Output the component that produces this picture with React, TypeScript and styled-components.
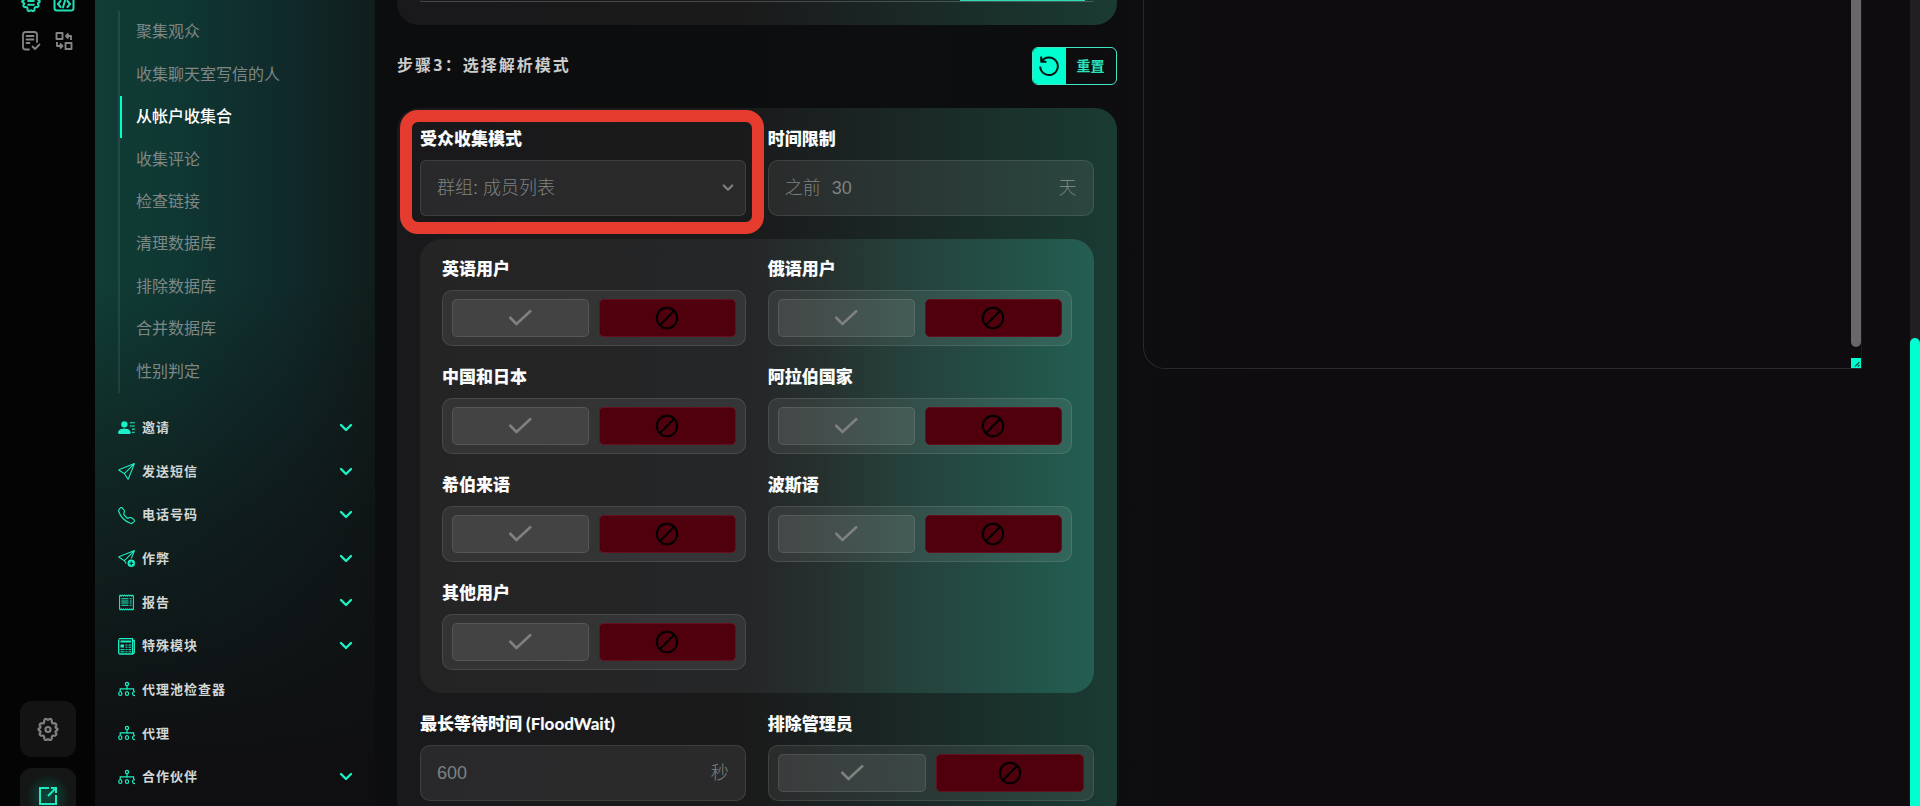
import React from 'react';
import styled, { createGlobalStyle, css } from 'styled-components';
import {
  BsPersonLinesFill,
  BsSend,
  BsTelephone,
  BsSendPlus,
  BsReceipt,
} from 'react-icons/bs';

const accent = '#00ffd0';
const cjk = "'Noto Sans CJK SC'";

const GlobalStyle = createGlobalStyle`
  *, *::before, *::after { box-sizing: border-box; }
  body {
    margin: 0;
    background: #0f0d10;
    color: #fff;
    font-family: 'Liberation Sans', ${cjk}, sans-serif;
  }
  button, input, select, textarea { font: inherit; color: inherit; }
`;

const Shell = styled.div`
  display: flex;
  height: 100vh;
  overflow: hidden;
  background: linear-gradient(90deg, #0b0d0e 375px, #0c0e0f 900px, #0f0c10 1300px);
`;

const Rail = styled.aside`
  flex: none;
  width: 95px;
  padding: 0 20px;
  display: flex;
  flex-direction: column;
  justify-content: space-between;
  background: #040405;
`;

const RailTools = styled.div`
  display: grid;
  grid-template-columns: 22px 22px;
  justify-content: center;
  gap: 18px 11px;
  flex: none;
  margin-top: -10px;
`;

const IconButton = styled.button<{ $on?: boolean }>`
  padding: 0;
  border: 0;
  background: none;
  display: grid;
  place-items: center;
  height: 22px;
  color: ${(p) => (p.$on ? '#1fe0b8' : '#858585')};
`;

const RailBottom = styled.div`
  display: flex;
  flex-direction: column;
  gap: 11px;
  margin-bottom: -18px;
`;

const TileButton = styled.button<{ $glow?: boolean }>`
  width: 56px;
  height: 56px;
  border: 0;
  border-radius: 12px;
  display: grid;
  place-items: center;
  padding: 0;
  background: ${(p) => (p.$glow ? 'radial-gradient(circle, #0c4a3c, #141716 55%)' : '#131314')};
  color: ${(p) => (p.$glow ? '#1fe8bd' : '#808080')};
`;

const Sidebar = styled.nav`
  flex: none;
  width: 280px;
  padding: 11px 22px 0 23px;
  overflow: hidden;
  background:
    linear-gradient(180deg, rgba(15, 15, 17, 0) 35%, rgba(15, 15, 17, 0.6) 65%, #0f0f11 95%),
    linear-gradient(90deg, #103d35 0%, #0f3733 30%, #10292a 70%, #101d1b 100%);
`;

const SubMenu = styled.ul`
  list-style: none;
  margin: 0;
  padding: 0;
  height: 382px;
  display: flex;
  flex-direction: column;
  border-left: 2px solid rgba(255, 255, 255, 0.08);
`;

const SubItem = styled.li`
  flex: 1;
  display: flex;
`;

const SubLink = styled.a<{ $active?: boolean }>`
  flex: 1;
  display: flex;
  align-items: center;
  padding-left: 14px;
  border-left: 2px solid ${(p) => (p.$active ? accent : 'transparent')};
  font-size: 16px;
  line-height: 20px;
  text-decoration: none;
  color: ${(p) => (p.$active ? '#fff' : '#7f8785')};
  font-weight: ${(p) => (p.$active ? 500 : 400)};
`;

const Menu = styled.ul`
  list-style: none;
  margin: 13px 0 0;
  padding: 0;
  height: 393px;
  display: flex;
  flex-direction: column;
`;

const MenuItem = styled.li`
  flex: 1;
  display: flex;
`;

const MenuLink = styled.a`
  flex: 1;
  display: flex;
  align-items: center;
  gap: 7px;
  font-size: 13px;
  line-height: 18px;
  letter-spacing: 1px;
  font-weight: 700;
  text-decoration: none;
  color: #d2d6d5;

  svg { flex: none; color: #1cf0c4; }
  svg:last-child:not(:first-child) { margin-left: auto; }
`;

const Content = styled.div`
  flex: 1;
  min-width: 0;
  display: grid;
  grid-template-columns: minmax(0, 1fr) minmax(0, 1fr);
  gap: 26px;
  align-items: start;
  padding: 0 48px 0 22px;
`;

const Main = styled.main`
  min-width: 0;
`;

const cardSkin = css`
  background: linear-gradient(90deg, #19191b 0%, #1a1a1b 48%, #1a2523 66%, #1a3b33 100%);
`;

const TopCard = styled.section`
  ${cardSkin}
  height: 25px;
  padding: 0 23px;
  border-radius: 0 0 22px 22px;
`;

const TopField = styled.div`
  height: 2px;
  padding: 0 9px;
  border-bottom: 1px solid rgba(255, 255, 255, 0.2);
  border-radius: 0 0 10px 10px;
  display: flex;
  justify-content: flex-end;
`;

const TopFill = styled.div`
  width: 19%;
  height: 1px;
  background: #2bdcb8;
`;

const StepHeader = styled.header`
  display: flex;
  align-items: center;
  justify-content: space-between;
  margin: 22px 0 23px;
`;

const StepTitle = styled.h2`
  margin: 0;
  font-family: 'DejaVu Sans Mono', ${cjk}, monospace;
  font-size: 16px;
  line-height: 20px;
  letter-spacing: 2px;
  font-weight: 700;
  color: #cbcccc;
`;

const ResetButton = styled.button`
  display: flex;
  width: 85px;
  height: 38px;
  padding: 0;
  overflow: hidden;
  border: 1px solid #3fe6c4;
  border-radius: 6px;
  background: none;
  color: #2be0bb;
  font-size: 14px;
  line-height: 18px;
  font-weight: 700;
`;

const ResetIcon = styled.span`
  width: 33px;
  height: 36px;
  display: grid;
  place-items: center;
  background: ${accent};
  color: #04120f;
`;

const ResetText = styled.span`
  flex: 1;
  align-self: center;
  text-align: center;
`;

const Card = styled.section`
  ${cardSkin}
  border-radius: 22px;
  padding: 20px 23px;
  display: grid;
  grid-template-columns: minmax(0, 1fr) minmax(0, 1fr);
  gap: 20px 22px;
`;

const LanguagePanel = styled.div`
  grid-column: 1 / -1;
  margin-top: 3px;
  border-radius: 22px;
  padding: 19px 22px 23px;
  display: grid;
  grid-template-columns: minmax(0, 1fr) minmax(0, 1fr);
  gap: 20px 22px;
  background: linear-gradient(90deg, #242425 0%, #252627 48%, #26302e 59%, #25443e 75%, #235047 87%, #235f52 100%);
`;

const Field = styled.div`
  position: relative;
  min-width: 0;
  margin: 0;
  padding: 0;
  border: 0;
`;

const FieldLabel = styled.label`
  display: block;
  margin-bottom: 10px;
  font-family: Lato, ${cjk}, sans-serif;
  font-size: 17px;
  line-height: 22px;
  font-weight: 900;
  color: #fafcfc;
`;

const boxSkin = css`
  height: 56px;
  background: rgba(255, 255, 255, 0.07);
  border: 1px solid rgba(255, 255, 255, 0.1);
  border-radius: 10px;
`;

const InputBox = styled.div`
  ${boxSkin}
  display: flex;
  align-items: center;
  gap: 11px;
  padding: 0 16px;
  font-size: 18px;
  line-height: 24px;
  font-weight: 300;
  color: #7e8281;
`;

const TextInput = styled.input`
  flex: 1;
  min-width: 0;
  padding: 0;
  border: 0;
  outline: 0;
  background: none;
`;

const SelectBox = styled(InputBox)`
  border-radius: 6px;
  padding-right: 11px;
`;

const Select = styled.select`
  flex: 1;
  min-width: 0;
  padding: 0;
  border: 0;
  appearance: none;
  background: none;
`;

const ToggleBox = styled.div`
  ${boxSkin}
  display: grid;
  grid-template-columns: 1fr 1fr;
  gap: 10px;
  padding: 8px 9px;
`;

const ToggleButton = styled.button<{ $off?: boolean }>`
  display: grid;
  place-items: center;
  padding: 0;
  border-radius: 5px;
  border: 1px solid ${(p) => (p.$off ? '#650f20' : 'rgba(255, 255, 255, 0.1)')};
  background: ${(p) => (p.$off ? '#50000d' : 'rgba(255, 255, 255, 0.08)')};
  color: ${(p) => (p.$off ? '#000' : '#7e8180')};
`;

const Highlight = styled.div`
  position: absolute;
  inset: -18px -18px -18px -20px;
  border: 12px solid #e63c30;
  border-radius: 18px;
  pointer-events: none;
`;

const OutputBox = styled.div`
  display: flex;
  height: 369px;
  overflow: hidden;
  border: 1px solid #2a282b;
  border-top: 0;
  border-radius: 0 0 0 22px;
  border-right-color: #1b191c;
`;

const Output = styled.textarea`
  flex: 1;
  border: 0;
  outline: 0;
  resize: none;
  background: none;
`;

const OutputBar = styled.div`
  display: flex;
  flex-direction: column;
  justify-content: space-between;
  width: 10px;
`;

const OutputThumb = styled.div`
  height: 347px;
  border-radius: 0 0 5px 5px;
  background: #6a676b;
`;

const Grip = styled.svg`
  display: block;
  background: ${accent};
`;

const PageTrack = styled.div`
  flex: none;
  width: 10px;
  padding-top: 338px;
  background: #211f22;
`;

const PageThumb = styled.div`
  height: 100%;
  border-radius: 5px 5px 0 0;
  background: ${accent};
`;

const Chevron = ({ size = 14 }: { size?: number }) => (
  <svg width={size} height={size} viewBox="0 0 14 14" fill="none" stroke="currentColor" strokeWidth="2.4" strokeLinecap="round" strokeLinejoin="round" aria-hidden="true">
    <path d="M2 4l5 5 5-5" />
  </svg>
);

const CheckIcon = () => (
  <svg width="26" height="20" viewBox="0 0 26 20" fill="none" stroke="currentColor" strokeWidth="2.600" aria-hidden="true">
    <path d="M2.500 9L9.500 16 24 2.500" />
  </svg>
);

const BanIcon = () => (
  <svg width="24" height="24" viewBox="0 0 24 24" fill="none" stroke="currentColor" strokeWidth="2" aria-hidden="true">
    <circle cx="12" cy="12" r="10.200" />
    <path d="M5 19L19 5" />
  </svg>
);

const ResetGlyph = () => (
  <svg width="22" height="22" viewBox="0 0 22 22" fill="none" stroke="currentColor" strokeWidth="2" strokeLinejoin="round" aria-hidden="true">
    <path d="M3.800 6.200A8.800 8.800 0 1 1 2.200 11.500M3.200 1.500V6.800H8.500" />
  </svg>
);

const NewsIcon = () => (
  <svg width="17" height="17" viewBox="0 0 17 17" fill="none" stroke="currentColor" aria-hidden="true">
    <path d="M1 .700h13.500v15.300H1.800A1.200 1.200 0 0 1 .700 14.800V1.500M14.500 2.500h1.800v12.300a1.200 1.200 0 0 1-2.200 0" strokeWidth="1.300" />
    <path d="M2.500 3.500h10.500" strokeWidth="2" />
    <rect x="2.500" y="6.500" width="3.500" height="3" fill="currentColor" stroke="none" />
    <path d="M7.500 7h2M10.500 7h2.500M7.500 9.200h2M10.500 9.200h2.500M2.500 11.600h4M7.500 11.600h2M10.500 11.600h2.500M2.500 13.800h4M7.500 13.800h2M10.500 13.800h2.500" strokeWidth="1" />
  </svg>
);

const OrgIcon = () => (
  <svg width="17" height="17" viewBox="0 0 17 17" fill="none" stroke="currentColor" strokeWidth="1.200" aria-hidden="true">
    <circle cx="9" cy="3" r="1.600" />
    <path d="M9 4.700v4M2.200 10V7.800h13.400V10" />
    <ellipse cx="2.300" cy="12.600" rx="1.600" ry="1.900" />
    <ellipse cx="9" cy="12.600" rx="1.600" ry="1.900" />
    <path d="M17 10.900a1.700 1.900 0 1 0 0 3.400" />
  </svg>
);

const GearIcon = ({ size, inner }: { size: number; inner: React.ReactNode }) => (
  <svg width={size} height={size} viewBox="0 0 24 24" fill="none" stroke="currentColor" strokeWidth="2.200" strokeLinejoin="round" strokeLinecap="round" aria-hidden="true">
    <path d="M8.200 4.500C7.900 2.300 9.800 1 11 2.400c.6.700 1.400.7 2 0 1.200-1.400 3.100-.1 2.800 2.100-.1 1.300.9 2.200 2.200 1.900 1.900-.5 2.900 1.200 1.900 2.700-.7 1-.4 1.900.7 2.300 1.300.5 1.300 1.700 0 2.200-1.100.4-1.400 1.300-.7 2.300 1 1.500 0 3.200-1.900 2.700-1.300-.3-2.300.6-2.200 1.900.3 2.200-1.600 3.500-2.800 2.100-.6-.7-1.400-.7-2 0-1.200 1.400-3.100.1-2.800-2.100.1-1.300-.9-2.200-2.200-1.900-1.900.5-2.900-1.200-1.900-2.700.7-1 .4-1.900-.7-2.300-1.300-.5-1.300-1.700 0-2.200 1.100-.4 1.400-1.300.7-2.300-1-1.500 0-3.200 1.900-2.700 1.300.3 2.300-.6 2.200-1.900z" />
    {inner}
  </svg>
);

const CodeIcon = () => (
  <svg width="22" height="22" viewBox="0 0 22 22" fill="none" stroke="currentColor" strokeWidth="2" strokeLinecap="round" strokeLinejoin="round" aria-hidden="true">
    <rect x="1.500" y="1.500" width="19" height="19" rx="2.500" />
    <path d="M7.500 11l-2.500 3 2.500 3M14.500 11l2.500 3-2.500 3M12 10.500l-2 7" />
  </svg>
);

const NoteCheckIcon = () => (
  <svg width="20" height="20" viewBox="0 0 20 20" fill="none" stroke="currentColor" strokeWidth="1.800" strokeLinecap="round" strokeLinejoin="round" aria-hidden="true">
    <path d="M8 18.500H4.500A2.500 2.500 0 0 1 2 16v-12.500A2.500 2.500 0 0 1 4.500 1h9A2.500 2.500 0 0 1 16 3.500V11M5.500 5h7M5.500 8.500h7M5.500 12h3M11.500 15.500l2.500 2.500 4.500-4.500" />
  </svg>
);

const SwapIcon = () => (
  <svg width="20" height="20" viewBox="0 0 20 20" fill="none" stroke="currentColor" strokeWidth="1.900" strokeLinejoin="round" aria-hidden="true">
    <rect x="2.500" y="2" width="6" height="6" />
    <rect x="11.500" y="12" width="6" height="6" />
    <path d="M17 9V5h-4.500M14.500 2.500L12 5l2.500 2.500M3 11v4h5M6 12.500L8.500 15 6 17.500" />
  </svg>
);

const OpenIcon = () => (
  <svg width="20" height="20" viewBox="0 0 20 20" fill="none" stroke="currentColor" strokeWidth="2" aria-hidden="true">
    <path d="M11 2H2v16h16V9M13 2h5v5M18 2l-8 8" />
  </svg>
);

const subItems = ['聚集观众', '收集聊天室写信的人', '从帐户收集合', '收集评论', '检查链接', '清理数据库', '排除数据库', '合并数据库', '性别判定'];

const menuItems: { text: string; icon: React.ReactNode; open?: boolean }[] = [
  { text: '邀请', icon: <BsPersonLinesFill size={17} />, open: true },
  { text: '发送短信', icon: <BsSend size={17} />, open: true },
  { text: '电话号码', icon: <BsTelephone size={17} />, open: true },
  { text: '作弊', icon: <BsSendPlus size={17} />, open: true },
  { text: '报告', icon: <BsReceipt size={17} />, open: true },
  { text: '特殊模块', icon: <NewsIcon />, open: true },
  { text: '代理池检查器', icon: <OrgIcon /> },
  { text: '代理', icon: <OrgIcon /> },
  { text: '合作伙伴', icon: <OrgIcon />, open: true },
];

const languages = ['英语用户', '俄语用户', '中国和日本', '阿拉伯国家', '希伯来语', '波斯语', '其他用户'];

const Toggle = ({ id, label }: { id: string; label: string }) => (
  <Field role="group" aria-labelledby={id}>
    <FieldLabel as="div" id={id}>{label}</FieldLabel>
    <ToggleBox>
      <ToggleButton type="button" aria-label={`${label} 是`} aria-pressed={false}><CheckIcon /></ToggleButton>
      <ToggleButton type="button" aria-label={`${label} 否`} aria-pressed $off><BanIcon /></ToggleButton>
    </ToggleBox>
  </Field>
);

export default function App() {
  return (
    <>
      <GlobalStyle />
      <Shell>
        <Rail>
          <RailTools>
            <IconButton $on aria-label="自动化"><GearIcon size={22} inner={<path d="M9 8h6M9 12h6M9 16h6" />} /></IconButton>
            <IconButton $on aria-label="代码"><CodeIcon /></IconButton>
            <IconButton aria-label="任务"><NoteCheckIcon /></IconButton>
            <IconButton aria-label="转换"><SwapIcon /></IconButton>
          </RailTools>
          <RailBottom>
            <TileButton aria-label="设置"><GearIcon size={24} inner={<circle cx="12" cy="12.500" r="2.500" />} /></TileButton>
            <TileButton $glow aria-label="打开"><OpenIcon /></TileButton>
          </RailBottom>
        </Rail>

        <Sidebar>
          <SubMenu>
            {subItems.map((text, i) => (
              <SubItem key={text}><SubLink href="#" $active={i === 2}>{text}</SubLink></SubItem>
            ))}
          </SubMenu>
          <Menu>
            {menuItems.map(({ text, icon, open }) => (
              <MenuItem key={text}>
                <MenuLink href="#">{icon}<span>{text}</span>{open && <Chevron />}</MenuLink>
              </MenuItem>
            ))}
          </Menu>
        </Sidebar>

        <Content>
          <Main>
            <TopCard><TopField><TopFill /></TopField></TopCard>
            <StepHeader>
              <StepTitle>步骤3：选择解析模式</StepTitle>
              <ResetButton type="button">
                <ResetIcon><ResetGlyph /></ResetIcon>
                <ResetText>重置</ResetText>
              </ResetButton>
            </StepHeader>
            <Card>
              <Field>
                <FieldLabel htmlFor="mode">受众收集模式</FieldLabel>
                <SelectBox>
                  <Select id="mode" defaultValue="members">
                    <option value="members">群组: 成员列表</option>
                  </Select>
                  <Chevron size={12} />
                </SelectBox>
                <Highlight />
              </Field>
              <Field>
                <FieldLabel htmlFor="limit">时间限制</FieldLabel>
                <InputBox>
                  <span>之前</span>
                  <TextInput id="limit" defaultValue="30" />
                  <span>天</span>
                </InputBox>
              </Field>
              <LanguagePanel>
                {languages.map((name, i) => <Toggle key={name} id={`lang-${i}`} label={name} />)}
              </LanguagePanel>
              <Field>
                <FieldLabel htmlFor="wait">最长等待时间 (FloodWait)</FieldLabel>
                <InputBox>
                  <TextInput id="wait" defaultValue="600" />
                  <span>秒</span>
                </InputBox>
              </Field>
              <Toggle id="admins" label="排除管理员" />
            </Card>
          </Main>
          <OutputBox>
            <Output aria-label="输出" />
            <OutputBar>
              <OutputThumb />
              <Grip width="10" height="10" viewBox="0 0 10 10" stroke="#0b4a3e" strokeWidth="1.200" aria-hidden="true">
                <path d="M4 8.500L8.500 4M7 8.500L8.500 7" />
              </Grip>
            </OutputBar>
          </OutputBox>
        </Content>
        <PageTrack><PageThumb /></PageTrack>
      </Shell>
    </>
  );
}
